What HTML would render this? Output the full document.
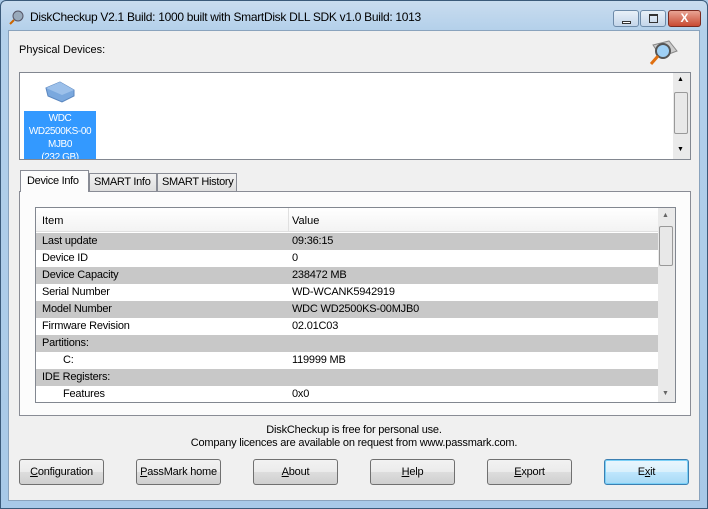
<!DOCTYPE html><html><head><style>
*{margin:0;padding:0;box-sizing:border-box}
body{width:708px;height:509px;position:relative;overflow:hidden;font-family:"Liberation Sans",sans-serif;font-size:11px;color:#000;background:#a9c8e6;white-space:nowrap}
.a{position:absolute}
.frame{left:0;top:0;width:708px;height:509px;background:linear-gradient(#c9dcef,#b3d0ea 30px,#a8c9e8);border:1px solid #3b5a7a;border-radius:6px 6px 0 0}
.client{left:8px;top:30px;width:692px;height:471px;background:#f0f0f0;border:1px solid #8aa3bd}
.btn{position:absolute;top:459px;width:85px;height:26px;border:1px solid #707070;border-radius:3px;background:linear-gradient(#f2f2f2,#ebebeb 50%,#dddddd 51%,#cfcfcf);text-align:center;line-height:24px;font-size:11px;letter-spacing:-0.2px}
.row{position:absolute;left:36px;width:622px;height:17px;line-height:17px;font-size:11px;letter-spacing:-0.2px}
.row.g{background:#c8c8c8}
.row span{position:absolute;left:6px}
.row b{position:absolute;left:256px;font-weight:normal}
.sb{background:#eaeaea}
</style></head><body>
<div class="a frame"></div>
<svg class="a" style="left:9px;top:9px" width="16" height="16"><circle cx="9" cy="7" r="5" fill="#9ab" stroke="#556" /><line x1="5" y1="11" x2="1" y2="15" stroke="#c60" stroke-width="2"/></svg>
<div class="a" style="left:30px;top:10px;font-size:12px;letter-spacing:-0.3px">DiskCheckup V2.1 Build: 1000 built with SmartDisk DLL SDK v1.0 Build: 1013</div>
<div class="a" style="left:613px;top:10px;width:26px;height:17px;border:1px solid #6d8aa8;border-radius:3px;background:linear-gradient(#e8f0f8,#c4d6ea)"><div class="a" style="left:8px;top:10px;width:9px;height:3px;border:1px solid #333;background:#fff"></div></div>
<div class="a" style="left:640px;top:10px;width:26px;height:17px;border:1px solid #6d8aa8;border-radius:3px;background:linear-gradient(#e8f0f8,#c4d6ea)"><div class="a" style="left:8px;top:3px;width:9px;height:9px;border:1px solid #333;border-top-width:2px"></div></div>
<div class="a" style="left:668px;top:10px;width:33px;height:17px;border:1px solid #7a2a20;border-radius:3px;background:linear-gradient(#e8a494,#c94a32);color:#fff;font-weight:bold;text-align:center;line-height:15px;font-size:12px">X</div>
<div class="a client"></div>
<div class="a" style="left:19px;top:44px;font-size:11px">Physical Devices:</div>
<svg class="a" style="left:647px;top:37px" width="32" height="32"><path d="M6 8 L22 4 L30 14 L14 20 Z" fill="#ccc" stroke="#888"/><circle cx="16" cy="14" r="7" fill="#9fd0f5" stroke="#555" stroke-width="2"/><line x1="11" y1="19" x2="4" y2="27" stroke="#e07010" stroke-width="3"/></svg>
<div class="a" style="left:19px;top:72px;width:672px;height:88px;background:#fff;border:1px solid #828790"></div>
<div class="a sb" style="left:673px;top:73px;width:17px;height:86px"></div>
<div class="a" style="left:674px;top:92px;width:14px;height:42px;border:1px solid #999;border-radius:2px;background:#e8e8e8"></div>
<div class="a" style="left:677px;top:76px;font-size:7px">▲</div><div class="a" style="left:677px;top:146px;font-size:7px">▼</div>
<svg class="a" style="left:44px;top:80px" width="32" height="24"><path d="M2 8 L16 2 L30 10 L30 16 L18 22 L4 16 Z" fill="#7aa8de" stroke="#5a86bf"/><path d="M2 8 L16 2 L30 10 L18 15 Z" fill="#9cc0ea"/></svg>
<div class="a" style="left:24px;top:111px;width:72px;height:48px;background:#3399ff;color:#fff;text-align:center;font-size:10px;line-height:13px;overflow:hidden;padding-top:1px;letter-spacing:-0.4px">WDC<br>WD2500KS-00<br>MJB0<br>(232 GB)</div>
<div class="a" style="left:19px;top:191px;width:672px;height:225px;background:#fcfcfc;border:1px solid #898c95"></div>
<div class="a" style="left:20px;top:170px;width:69px;height:22px;background:#fcfcfc;border:1px solid #898c95;border-bottom:none;line-height:20px;padding-left:6px;font-size:11px;letter-spacing:-0.3px">Device Info</div>
<div class="a" style="left:89px;top:173px;width:68px;height:18px;background:linear-gradient(#f2f2f2,#dedede);border:1px solid #898c95;border-bottom:none;line-height:17px;padding-left:4px;letter-spacing:-0.3px">SMART Info</div>
<div class="a" style="left:157px;top:173px;width:80px;height:18px;background:linear-gradient(#f2f2f2,#dedede);border:1px solid #898c95;border-bottom:none;line-height:17px;padding-left:4px;letter-spacing:-0.3px">SMART History</div>
<div class="a" style="left:35px;top:207px;width:641px;height:196px;background:#fff;border:1px solid #828790"></div>
<div class="a" style="left:36px;top:208px;width:622px;height:24px;background:linear-gradient(#fff,#f3f3f3);border-bottom:1px solid #e0e0e0"></div>
<div class="a" style="left:288px;top:208px;width:1px;height:24px;background:#e0e0e0"></div>
<div class="a" style="left:42px;top:215px">Item</div><div class="a" style="left:292px;top:215px">Value</div>
<div class="row g" style="top:233px"><span>Last update</span><b>09:36:15</b></div>
<div class="row" style="top:250px"><span>Device ID</span><b>0</b></div>
<div class="row g" style="top:267px"><span>Device Capacity</span><b>238472 MB</b></div>
<div class="row" style="top:284px"><span>Serial Number</span><b>WD-WCANK5942919</b></div>
<div class="row g" style="top:301px"><span>Model Number</span><b>WDC WD2500KS-00MJB0</b></div>
<div class="row" style="top:318px"><span>Firmware Revision</span><b>02.01C03</b></div>
<div class="row g" style="top:335px"><span>Partitions:</span></div>
<div class="row" style="top:352px"><span style="left:27px">C:</span><b>119999 MB</b></div>
<div class="row g" style="top:369px"><span>IDE Registers:</span></div>
<div class="row" style="top:386px"><span style="left:27px">Features</span><b>0x0</b></div>
<div class="a sb" style="left:658px;top:208px;width:17px;height:194px"></div>
<div class="a" style="left:659px;top:226px;width:14px;height:40px;border:1px solid #999;border-radius:2px;background:#e8e8e8"></div>
<div class="a" style="left:662px;top:212px;font-size:7px;color:#666">▲</div><div class="a" style="left:662px;top:390px;font-size:7px;color:#666">▼</div>
<div class="a" style="left:0;top:424px;width:708px;text-align:center;font-size:11px;line-height:13px;letter-spacing:-0.2px">DiskCheckup is free for personal use.<br>Company licences are available on request from www.passmark.com.</div>
<div class="btn" style="left:19px"><u>C</u>onfiguration</div>
<div class="btn" style="left:136px"><u>P</u>assMark home</div>
<div class="btn" style="left:253px"><u>A</u>bout</div>
<div class="btn" style="left:370px"><u>H</u>elp</div>
<div class="btn" style="left:487px"><u>E</u>xport</div>
<div class="btn" style="left:604px;border-color:#3c7fb1;background:linear-gradient(#eaf6fd,#d9f0fc 50%,#bee6fd 51%,#a7d9f5);box-shadow:inset 0 0 0 1px #7ad0f7">E<u>x</u>it</div>
</body></html>
